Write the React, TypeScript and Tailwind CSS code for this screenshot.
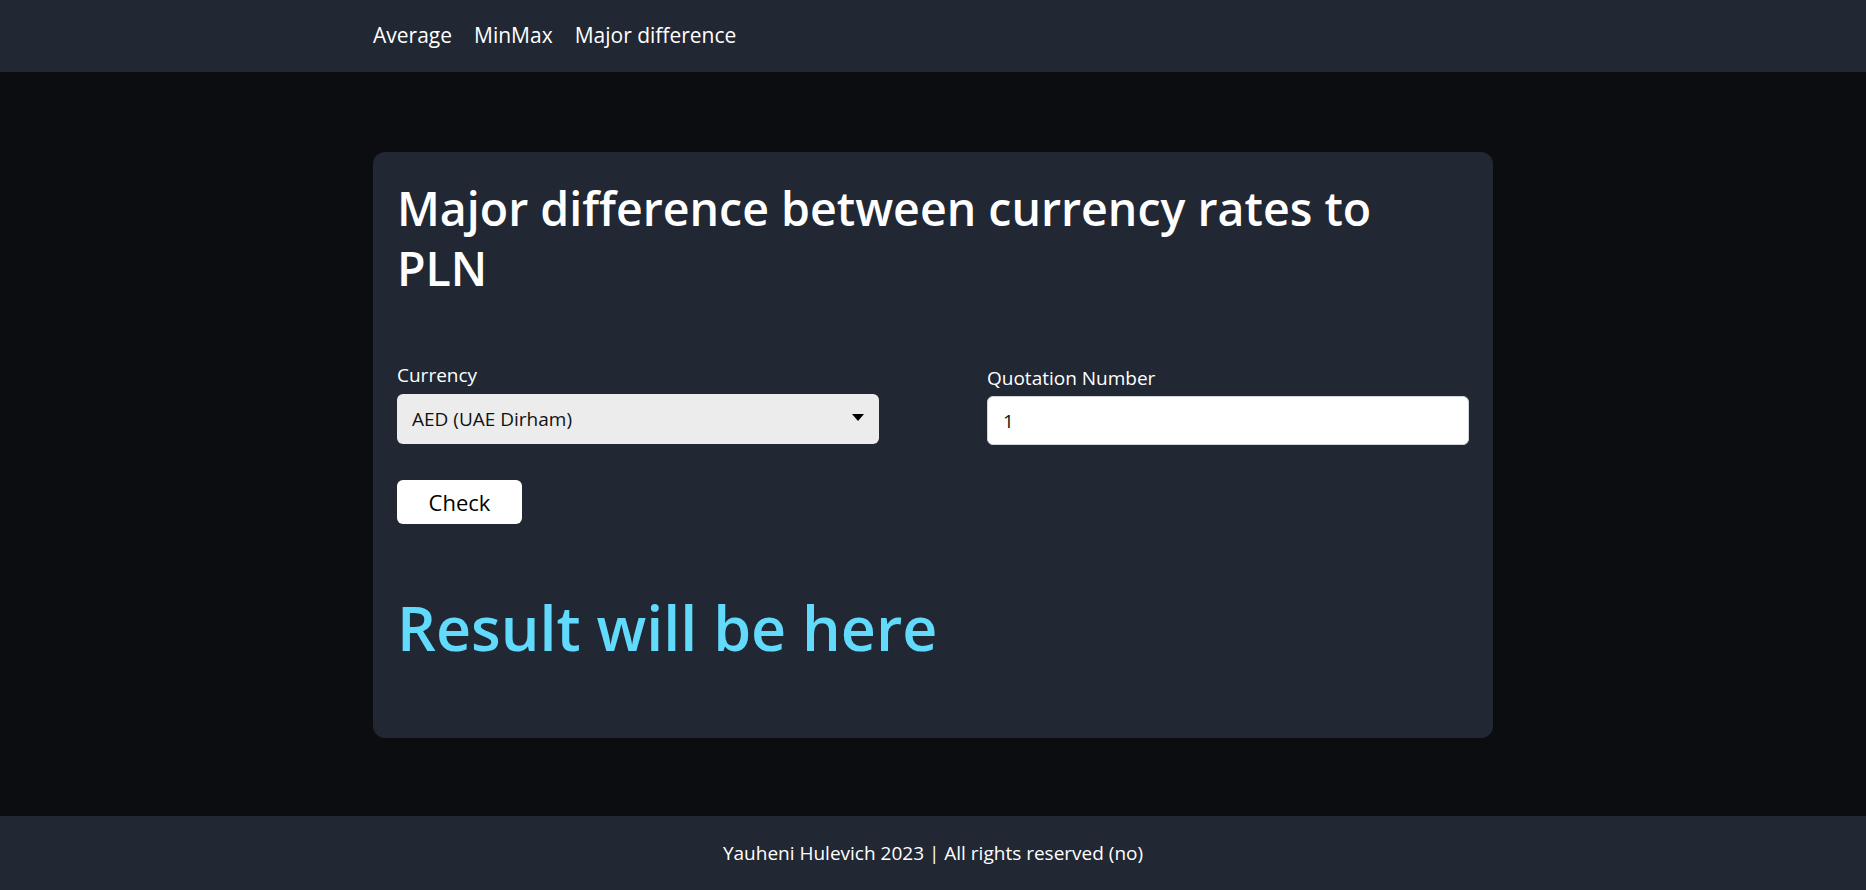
import { useState } from 'react';

export default function App() {
    const [currency, setCurrency] = useState('AED');
    const [quotations, setQuotations] = useState('1');

    return (
        <div className="min-h-screen flex flex-col bg-[#0b0d11] text-white font-['Open_Sans',sans-serif]">
            <nav className="h-[72px] bg-[#212733]">
                <div className="w-[1120px] mx-auto h-full flex items-center gap-[22px] text-[21px]">
                    <a href="#" className="text-white">Average</a>
                    <a href="#" className="text-white">MinMax</a>
                    <a href="#" className="text-white">Major difference</a>
                </div>
            </nav>

            <main className="flex-1 pt-20 pb-[78px]">
                <div className="w-[1120px] mx-auto bg-[#212733] rounded-xl px-6 pt-[26px] pb-[72px]">
                    <h1 className="text-[46.5px] leading-[60px] font-semibold">
                        Major difference between currency rates to PLN
                    </h1>

                    {/* Form */}
                    <div className="mt-[62px] flex justify-between">
                        <div className="w-[482px]">
                            <label className="block text-[19px] leading-[30px] mb-[4px]">Currency</label>
                            <div className="relative">
                                <select
                                    value={currency}
                                    onChange={(e) => setCurrency(e.target.value)}
                                    className="w-full h-[50px] appearance-none bg-[#ececec] text-[#111] rounded-md pl-[15px] text-[19px] outline-none"
                                >
                                    <option value="AED">AED (UAE Dirham)</option>
                                    <option value="USD">USD (US Dollar)</option>
                                    <option value="EUR">EUR (Euro)</option>
                                </select>
                                <svg className="absolute right-[15px] top-[20px] pointer-events-none" width="12" height="7" viewBox="0 0 12 7">
                                    <path d="M0 0h12L6 7z" fill="#000" />
                                </svg>
                            </div>
                        </div>
                        <div className="w-[482px] pt-[3px]">
                            <label className="block text-[19px] leading-[30px] mb-[3px]">Quotation Number</label>
                            <input
                                type="number"
                                value={quotations}
                                onChange={(e) => setQuotations(e.target.value)}
                                className="w-full h-[49px] bg-white text-[#111] border border-[#ced4da] rounded-md px-[15px] text-[19px] outline-none"
                            />
                        </div>
                    </div>

                    <button className="mt-[35px] w-[125px] h-[44px] bg-white text-black rounded-md text-[22px]">
                        Check
                    </button>

                    <p className="mt-[65px] text-[61px] leading-[77px] font-semibold text-[#61dafb]">
                        Result will be here
                    </p>
                </div>
            </main>

            <footer className="h-[74px] bg-[#212733] flex items-center justify-center text-[19px]">
                Yauheni Hulevich 2023 | All rights reserved (no)
            </footer>
        </div>
    );
}
